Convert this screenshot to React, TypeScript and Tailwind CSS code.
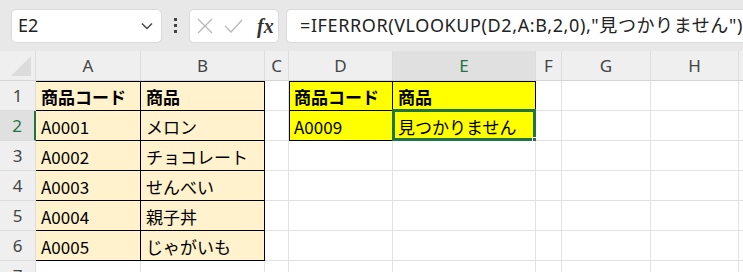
import React from "react";

const jp = "font-['Noto_Sans_CJK_JP',sans-serif]";
const ui = "font-['Noto_Sans','Noto_Sans_CJK_JP',sans-serif]";

const columns = [
  { key: "A", w: 105 },
  { key: "B", w: 124 },
  { key: "C", w: 24 },
  { key: "D", w: 104 },
  { key: "E", w: 143 },
  { key: "F", w: 26 },
  { key: "G", w: 89 },
  { key: "H", w: 88 },
  { key: "I", w: 40 },
];

type Cell = { text: string; bold?: boolean; fill?: string; box?: boolean };

const rows: Record<number, Record<string, Cell>> = {
  1: {
    A: { text: "商品コード", bold: true, fill: "bg-[#fff2cc]", box: true },
    B: { text: "商品", bold: true, fill: "bg-[#fff2cc]", box: true },
    D: { text: "商品コード", bold: true, fill: "bg-[#ffff00]", box: true },
    E: { text: "商品", bold: true, fill: "bg-[#ffff00]", box: true },
  },
  2: {
    A: { text: "A0001", fill: "bg-[#fff2cc]", box: true },
    B: { text: "メロン", fill: "bg-[#fff2cc]", box: true },
    D: { text: "A0009", fill: "bg-[#ffff00]", box: true },
    E: { text: "見つかりません", fill: "bg-[#ffff00]", box: true },
  },
  3: {
    A: { text: "A0002", fill: "bg-[#fff2cc]", box: true },
    B: { text: "チョコレート", fill: "bg-[#fff2cc]", box: true },
  },
  4: {
    A: { text: "A0003", fill: "bg-[#fff2cc]", box: true },
    B: { text: "せんべい", fill: "bg-[#fff2cc]", box: true },
  },
  5: {
    A: { text: "A0004", fill: "bg-[#fff2cc]", box: true },
    B: { text: "親子丼", fill: "bg-[#fff2cc]", box: true },
  },
  6: {
    A: { text: "A0005", fill: "bg-[#fff2cc]", box: true },
    B: { text: "じゃがいも", fill: "bg-[#fff2cc]", box: true },
  },
};

function Toolbar() {
  return (
    <div className="h-[51px] bg-[#e8e8e8] flex items-center pl-[11px] gap-0">
      {/* name box */}
      <div className="w-[151px] h-[34px] bg-white rounded-[5px] border border-[#dadada] flex items-center justify-between pl-[6px] pr-[8px]">
        <span className={`${ui} text-[18px] text-[#222]`}>E2</span>
        <svg width="12" height="8" viewBox="0 0 12 8">
          <path d="M1 1.5 L6 6.5 L11 1.5" fill="none" stroke="#444" strokeWidth="1.4" />
        </svg>
      </div>
      <div className="w-[27px] flex flex-col items-center gap-[3px]">
        <div className="w-[3px] h-[3px] bg-[#444]" />
        <div className="w-[3px] h-[3px] bg-[#444]" />
        <div className="w-[3px] h-[3px] bg-[#444]" />
      </div>
      {/* fx box */}
      <div className="w-[90px] h-[34px] bg-white rounded-[5px] border border-[#dadada] flex items-center pl-[7px] gap-[11px]">
        <svg width="16" height="16" viewBox="0 0 16 16">
          <path d="M1 1 L15 15 M15 1 L1 15" stroke="#b8b8b8" strokeWidth="1.3" />
        </svg>
        <svg width="19" height="14" viewBox="0 0 19 14">
          <path d="M1 7 L7 13 L18 1" fill="none" stroke="#b8b8b8" strokeWidth="1.3" />
        </svg>
        <span className="font-['Liberation_Serif',serif] italic font-bold text-[20px] text-[#333] leading-none ml-[3px]">
          fx
        </span>
      </div>
      {/* formula */}
      <div className="ml-[7px] flex-1 h-[34px] bg-white rounded-l-[5px] border border-r-0 border-[#dadada] flex items-center pl-[13px]">
        <span className={`${ui} text-[18px] text-[#222] whitespace-nowrap tracking-[0.6px]`}>
          =IFERROR(VLOOKUP(D2,A:B,2,0),"見つかりません")
        </span>
      </div>
    </div>
  );
}

function HeaderRow() {
  return (
    <div className="flex h-[30px] bg-[#efefef] border-b border-[#d4d4d4]">
      <div className="w-[36px] shrink-0 relative border-r border-[#dcdcdc]">
        <div className="absolute right-[4px] bottom-[4px] w-0 h-0 border-l-[20px] border-l-transparent border-b-[20px] border-b-[#dcdcdc]" />
      </div>
      {columns.map((c) => (
        <div
          key={c.key}
          style={{ width: c.w }}
          className={`shrink-0 flex items-center justify-center border-r border-[#dcdcdc] ${ui} text-[17px] ${
            c.key === "E" ? "bg-[#e0e0e0] text-[#217346]" : "text-[#444]"
          }`}
        >
          {c.key}
        </div>
      ))}
    </div>
  );
}

function DataRow({ r }: { r: number }) {
  const data = rows[r] || {};
  const selected = r === 2;
  return (
    <div className="flex h-[30px]">
      <div
        className={`w-[36px] shrink-0 flex items-center justify-center border-b border-[#dcdcdc] ${ui} text-[17px] ${
          selected
            ? "bg-[#e0e0e0] text-[#217346] border-r-2 border-r-[#217346]"
            : "bg-[#efefef] text-[#444] border-r border-r-[#dcdcdc]"
        }`}
      >
        {r}
      </div>
      {columns.map((c, i) => {
        const cell = data[c.key];
        const prev = i > 0 ? data[columns[i - 1].key] : undefined;
        const up = rows[r - 1]?.[c.key];
        const leftEdge = cell?.box && !prev?.box && c.key !== "A";
        const topEdge = cell?.box && !up?.box;
        const shadows =
          leftEdge && topEdge
            ? "shadow-[inset_1px_1px_0_#000]"
            : leftEdge
            ? "shadow-[inset_1px_0_0_#000]"
            : topEdge
            ? "shadow-[inset_0_1px_0_#000]"
            : "";
        const isSel = selected && c.key === "E";
        return (
          <div
            key={c.key}
            style={{ width: c.w }}
            className={`shrink-0 relative flex items-center pl-[5px] pt-[2px] border-r border-b whitespace-nowrap overflow-visible ${jp} text-[17px] text-black ${
              cell?.box ? "border-black" : "border-[#e1e1e1]"
            } ${cell?.fill ?? "bg-white"} ${cell?.bold ? "font-bold" : ""} ${shadows}`}
          >
            {cell?.text}
            {isSel && (
              <>
                <div className="absolute -left-[1px] -top-[2px] -right-[1px] -bottom-[1px] border-[3px] border-[#217346] pointer-events-none" />
                <div className="absolute -right-[4px] -bottom-[4px] w-[7px] h-[7px] bg-[#217346] border border-white" />
              </>
            )}
          </div>
        );
      })}
    </div>
  );
}

export default function App() {
  return (
    <div className="w-[743px] h-[272px] overflow-hidden bg-white">
      <Toolbar />
      <HeaderRow />
      {[1, 2, 3, 4, 5, 6, 7].map((r) => (
        <DataRow key={r} r={r} />
      ))}
    </div>
  );
}
